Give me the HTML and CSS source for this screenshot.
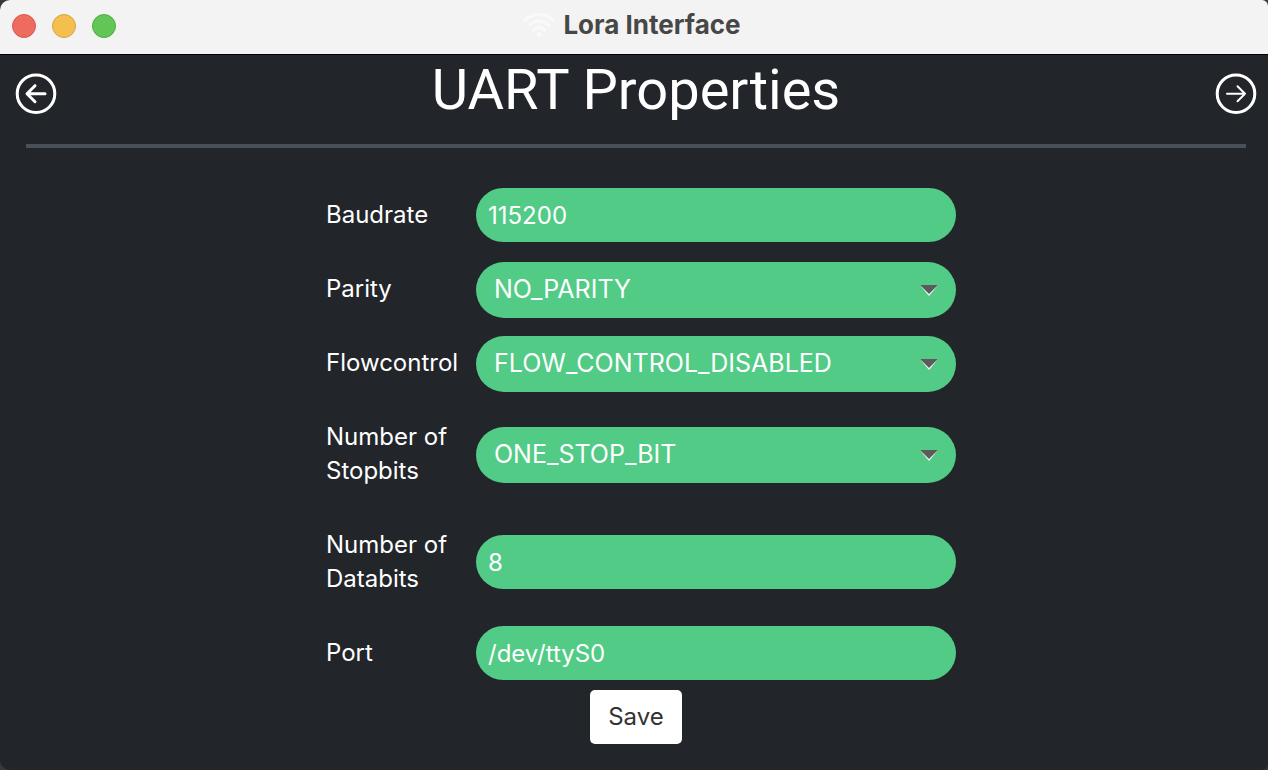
FILE: index.html
```html
<!DOCTYPE html>
<html lang="en">
<head>
<meta charset="utf-8">
<title>Lora Interface</title>
<link rel="stylesheet" href="styles.css">
</head>
<body>
<div class="window">
  <header class="titlebar">
    <div class="lights">
      <button class="light light-close" type="button" aria-label="Close"></button>
      <button class="light light-minimize" type="button" aria-label="Minimize"></button>
      <button class="light light-zoom" type="button" aria-label="Zoom"></button>
    </div>
    <div class="window-title">
      <svg class="wifi" viewBox="0 0 32 26" width="32" height="26" aria-hidden="true">
        <g fill="none" stroke="#f9f9f9" stroke-width="3.4" stroke-linecap="round">
          <path d="M2 8.2C10 .6 22 .6 30 8.2"/>
          <path d="M6.2 13.2C12 7.8 20 7.8 25.800 13.200"/>
          <path d="M10.500 18C13.700 15 18.300 15 21.500 18"/>
        </g>
        <circle cx="16" cy="22.500" r="2.400" fill="#f9f9f9"/>
      </svg>
      <span>Lora Interface</span>
    </div>
  </header>
  <main class="page">
    <div class="page-head">
      <button class="nav" type="button" aria-label="Back">
        <svg viewBox="0 0 42 42" width="42" height="42" fill="none" stroke="#fff" stroke-linecap="round" stroke-linejoin="round" aria-hidden="true">
          <circle cx="21" cy="20.700" r="18.800" stroke-width="3"/>
          <path d="M30 20.700H12.500M20 12.700L12 20.700L20 28.700" stroke-width="3"/>
        </svg>
      </button>
      <h1 class="heading">UART Properties</h1>
      <button class="nav" type="button" aria-label="Next">
        <svg viewBox="0 0 42 42" width="42" height="42" fill="none" stroke="#fff" stroke-linecap="round" stroke-linejoin="round" aria-hidden="true">
          <circle cx="21" cy="20.700" r="18.800" stroke-width="3"/>
          <path d="M12 20.700H30M22.500 13.200L30 20.700L22.500 28.200" stroke-width="2"/>
        </svg>
      </button>
    </div>
    <hr class="rule">
    <form class="form">
      <div class="row">
        <label class="label" for="baudrate">Baudrate</label>
        <input class="field" id="baudrate" type="text" value="115200">
      </div>
      <div class="row">
        <label class="label" for="parity">Parity</label>
        <div class="select-wrap">
          <select class="field field-select" id="parity"><option>NO_PARITY</option></select>
          <svg class="arrow" viewBox="0 0 18 12" width="18" height="12" aria-hidden="true"><path d="M0 0H18L9 11Z" fill="#fff"/><path d="M0 0H18L9 9Z" fill="#5b5b5b"/></svg>
        </div>
      </div>
      <div class="row">
        <label class="label" for="flow">Flowcontrol</label>
        <div class="select-wrap">
          <select class="field field-select" id="flow"><option>FLOW_CONTROL_DISABLED</option></select>
          <svg class="arrow" viewBox="0 0 18 12" width="18" height="12" aria-hidden="true"><path d="M0 0H18L9 11Z" fill="#fff"/><path d="M0 0H18L9 9Z" fill="#5b5b5b"/></svg>
        </div>
      </div>
      <div class="row">
        <label class="label" for="stopbits">Number of Stopbits</label>
        <div class="select-wrap">
          <select class="field field-select" id="stopbits"><option>ONE_STOP_BIT</option></select>
          <svg class="arrow" viewBox="0 0 18 12" width="18" height="12" aria-hidden="true"><path d="M0 0H18L9 11Z" fill="#fff"/><path d="M0 0H18L9 9Z" fill="#5b5b5b"/></svg>
        </div>
      </div>
      <div class="row">
        <label class="label" for="databits">Number of Databits</label>
        <input class="field" id="databits" type="text" value="8">
      </div>
      <div class="row">
        <label class="label" for="port">Port</label>
        <input class="field" id="port" type="text" value="/dev/ttyS0">
      </div>
      <button class="save" type="submit">Save</button>
    </form>
  </main>
</div>
</body>
</html>
```
FILE: styles.css
```css
* {
  box-sizing: border-box;
}

body {
  margin: 0;
  background: #3a383c;
  color: #fff;
  font-family: Inter, Roboto, "Liberation Sans", sans-serif;
  font-size: 24px;
  line-height: 34px;
}

.window {
  display: flex;
  flex-direction: column;
  min-height: 100vh;
  background: #222529;
  border-radius: 10px 6px 6px 10px;
  overflow: hidden;
}

.titlebar {
  display: grid;
  grid-template-columns: 1fr auto 1fr;
  align-items: center;
  height: 55px;
  padding: 0 16px 2px 12px;
  background: #f3f3f3;
  border-bottom: 1px solid #000;
}

.lights {
  display: flex;
  gap: 16px;
}

.light {
  width: 24px;
  height: 24px;
  padding: 0;
  border: 1px solid;
  border-radius: 50%;
}

.light-close {
  background: #ed6b5f;
  border-color: #d55b50;
}

.light-minimize {
  background: #f5bf50;
  border-color: #d8a344;
}

.light-zoom {
  background: #62c656;
  border-color: #53aa45;
}

.window-title {
  display: flex;
  align-items: center;
  gap: 8px;
  padding-bottom: 2px;
  color: #474747;
  font-size: 26px;
  font-weight: 700;
}

.wifi {
  display: block;
}

.page {
  padding: 0 0 24px 4px;
}

.page-head {
  display: flex;
  align-items: center;
  justify-content: space-between;
  height: 78px;
  padding: 0 11px;
}

.nav {
  width: 42px;
  height: 42px;
  padding: 0;
  border: 0;
  background: none;
}

.nav svg {
  display: block;
}

.heading {
  margin: 0 0 8px;
  font-family: Roboto, Inter, "Liberation Sans", sans-serif;
  font-size: 56px;
  font-weight: 400;
  line-height: 64px;
}

.rule {
  height: 4px;
  margin: 11px 22px 30px;
  border: 0;
  background: #495057;
}

.form {
  display: flex;
  flex-direction: column;
  width: 100%;
  max-width: 640px;
  margin: 0 auto;
}

.row {
  display: grid;
  grid-template-columns: 150px 1fr;
  column-gap: 10px;
  align-items: center;
}

.label {
  padding: 20px 0 20px 10px;
}

.field {
  display: block;
  width: 100%;
  height: 54px;
  padding: 0 12px;
  border: 0;
  border-radius: 28px;
  background: #52cb86;
  color: #fff;
  font: inherit;
}

.field-select {
  height: 56px;
  padding: 0 48px 2px 18px;
  font-size: 25px;
  appearance: none;
}

.select-wrap {
  position: relative;
  padding-top: 2px;
}

.arrow {
  position: absolute;
  top: 25px;
  right: 18px;
  pointer-events: none;
}

.save {
  align-self: center;
  height: 54px;
  padding: 0 18px;
  border: 0;
  border-radius: 5px;
  background: #fff;
  color: #333;
  font: inherit;
}
```
